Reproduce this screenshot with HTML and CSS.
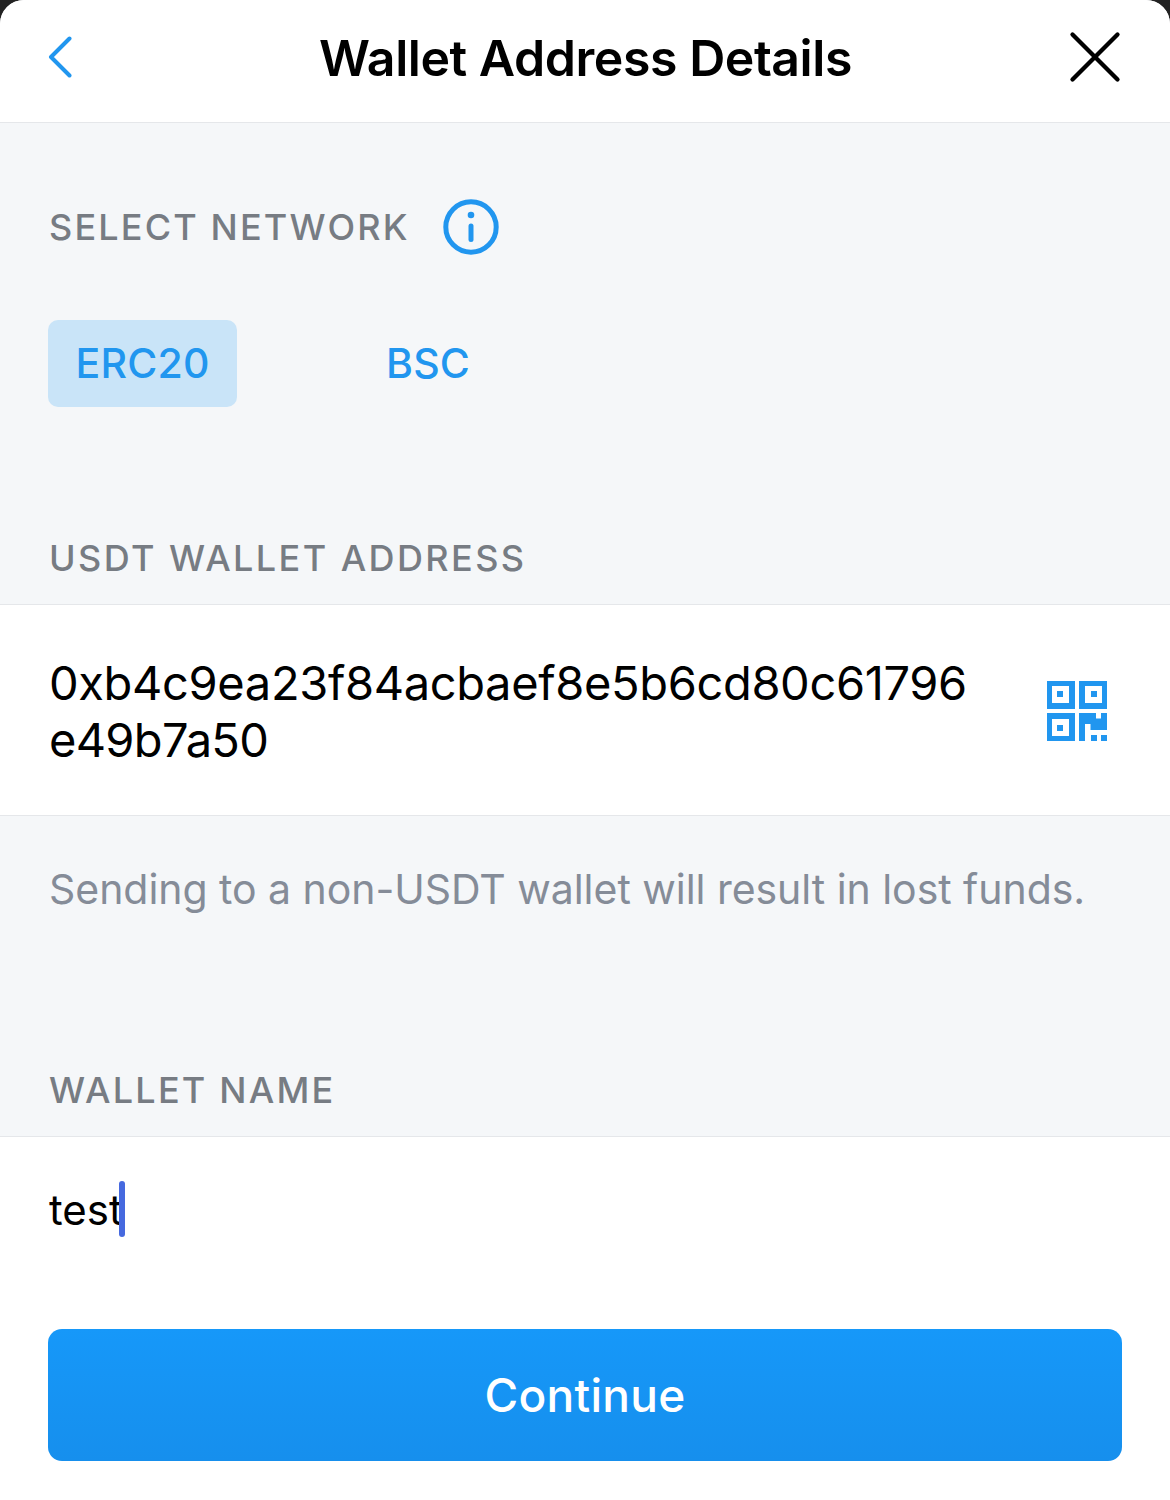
FILE: index.html
```
<!DOCTYPE html>
<html lang="en">
<head>
<meta charset="utf-8">
<title>Wallet Address Details</title>
<link rel="stylesheet" href="styles.css">
</head>
<body>
<main class="sheet">
  <header class="header">
    <button class="icon-button" aria-label="Back"><svg class="back" viewBox="0 0 24 42"><path d="M21.500 2.500 3 21l18.500 18.500"/></svg></button>
    <h1 class="title">Wallet Address Details</h1>
    <button class="icon-button" aria-label="Close"><svg class="close" viewBox="0 0 52 52"><path d="M3.500 3.500l45 45M48.500 3.500l-45 45"/></svg></button>
  </header>
  <section class="network">
    <div class="network-heading">
      <h2 class="label label-network">SELECT NETWORK</h2>
      <svg class="info" viewBox="0 0 56 56"><circle class="ring" cx="28" cy="28" r="25.200"/><circle class="dot" cx="28" cy="16" r="3.300"/><path class="stem" d="M28 27v13.500"/></svg>
    </div>
    <div class="options">
      <button class="option selected">ERC20</button>
      <button class="option bsc">BSC</button>
    </div>
  </section>
  <h2 class="label label-address">USDT WALLET ADDRESS</h2>
  <section class="address">
    <p class="address-text"><span class="hash">0xb4c9ea23f84acbaef8e5b6cd80c61796</span><br><span class="hash-end">e49b7a50</span></p>
    <svg class="qr" viewBox="0 0 60 60"><path fill-rule="evenodd" d="M0 0h28v28H0zM5 5v17h17V5zM10 10h6v6h-6zM32 0h28v28H32zM38 5v17h17V5zM44 10h6v6h-6zM0 32h28v28H0zM5 38v17h17V38zM10 44h6v6h-6zM32 32h17v5.500h5V32h6v17H43.500v-6H38v17h-6zM44 54h6v6h-6zM54 54h6v6h-6z"/></svg>
  </section>
  <p class="warning">Sending to a non-USDT wallet will result in lost funds.</p>
  <h2 class="label label-name">WALLET NAME</h2>
  <section class="name">
    <div class="field"><span class="value">test</span><span class="caret"></span></div>
    <button class="continue">Continue</button>
  </section>
</main>
</body>
</html>
```
FILE: styles.css
```
* { box-sizing: border-box; }
body { margin: 0; background: #222; font-family: Inter, "Liberation Sans", sans-serif; }
button { border: 0; background: none; padding: 0; font: inherit; }
h1, h2, p { margin: 0; font-weight: 400; }
svg { display: block; fill: none; stroke-linecap: round; stroke-linejoin: round; }
.sheet { height: 1500px; background: #f5f7f9; border-radius: 24px 24px 0 0; overflow: hidden; white-space: nowrap; }
.header { height: 123px; padding: 0 49px 9px 48px; background: #fff; border-bottom: 1px solid #e5e7ea; display: grid; grid-template-columns: 52px 1fr 52px; align-items: center; }
.icon-button { display: flex; }
.back { width: 24px; height: 42px; stroke: #2196ef; stroke-width: 4; }
.close { width: 52px; height: 52px; stroke: #000; stroke-width: 4.3; }
.title { padding: 2px 0 0 2px; font-size: 50px; font-weight: 600; letter-spacing: -.45px; text-align: center; line-height: 60px; }
.network { height: 397px; padding: 76px 48px 0; }
.network-heading { display: flex; align-items: center; height: 56px; }
.label { color: #777c83; font-size: 36px; font-weight: 450; letter-spacing: 2.4px; line-height: 44px; }
.label-network { width: 395px; padding: 0 0 1px 1px; letter-spacing: 2.15px; }
.info { width: 56px; height: 56px; }
.ring, .stem { stroke: #2196ef; stroke-width: 5; }
.dot { fill: #2196ef; }
.options { margin-top: 65px; display: flex; gap: 149px; }
.option { height: 87px; padding-bottom: 1px; color: #2196ef; font-size: 41px; font-weight: 500; letter-spacing: .2px; }
.selected { width: 189px; background: #c9e4f8; border-radius: 10px; }
.label-address { height: 84px; padding: 16px 49px 0; }
.address { height: 212px; background: #fff; border: solid #e5e7ea; border-width: 1px 0; display: flex; align-items: center; justify-content: space-between; padding: 2px 63px 0 49px; }
.address-text { font-size: 47px; line-height: 57px; }
.hash { letter-spacing: -.35px; }
.hash-end { letter-spacing: -.7px; }
.qr { width: 60px; height: 60px; fill: #2196ef; }
.warning { height: 236px; padding: 47px 49px 0; color: #858c98; font-size: 41px; line-height: 52px; letter-spacing: -.04px; }
.label-name { height: 84px; padding: 16px 49px 0; letter-spacing: 2.2px; }
.name { height: 364px; background: #fff; border-top: 1px solid #e5e7ea; padding: 44px 48px 0; }
.field { display: flex; height: 56px; padding-left: 1px; line-height: 57px; font-size: 42px; }
.caret { width: 6px; height: 56px; margin-left: -4px; background: #4669df; border-radius: 3px; }
.continue { display: block; width: 100%; height: 132px; margin-top: 92px; border-radius: 14px; color: #fff; background: linear-gradient(#1698f9, #168fed); font-size: 46px; font-weight: 500; letter-spacing: .3px; }
```
